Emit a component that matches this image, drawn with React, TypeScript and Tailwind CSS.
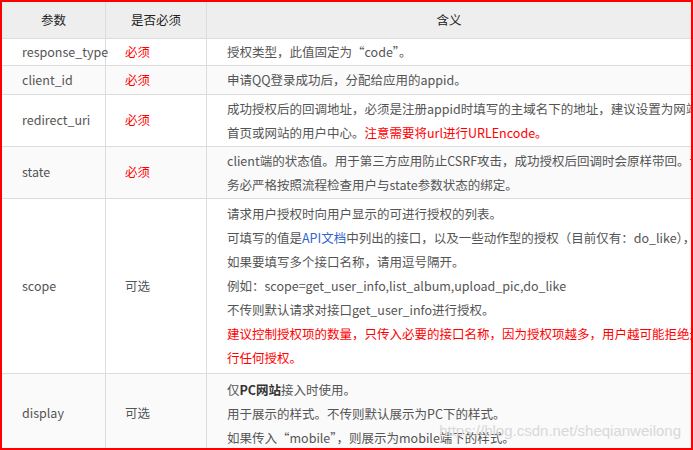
const F = { fontFamily: '"Microsoft YaHei","Noto Sans CJK SC","Liberation Sans",sans-serif' };
const R = "text-[#ff0000]";
const rows: { p: string; m: string; req: boolean; h: number; bg: string; d: React.ReactNode }[] = [
  { p: "response_type", m: "必须", req: true, h: 27, bg: "bg-white", d: <div>授权类型，此值固定为“code”。</div> },
  { p: "client_id", m: "必须", req: true, h: 29, bg: "bg-[#fafafa]", d: <div>申请QQ登录成功后，分配给应用的appid。</div> },
  { p: "redirect_uri", m: "必须", req: true, h: 52, bg: "bg-white", d: <><div>成功授权后的回调地址，必须是注册appid时填写的主域名下的地址，建议设置为网站</div><div>首页或网站的用户中心。<span className={R}>注意需要将url进行URLEncode。</span></div></> },
  { p: "state", m: "必须", req: true, h: 52, bg: "bg-[#fafafa]", d: <><div>client端的状态值。用于第三方应用防止CSRF攻击，成功授权后回调时会原样带回。请</div><div>务必严格按照流程检查用户与state参数状态的绑定。</div></> },
  { p: "scope", m: "可选", req: false, h: 175, bg: "bg-white", d: <><div>请求用户授权时向用户显示的可进行授权的列表。</div><div>可填写的值是<span className="text-[#3366cc]">API文档</span>中列出的接口，以及一些动作型的授权（目前仅有：do_like），</div><div>如果要填写多个接口名称，请用逗号隔开。</div><div>例如：scope=get_user_info,list_album,upload_pic,do_like</div><div>不传则默认请求对接口get_user_info进行授权。</div><div className={R}>建议控制授权项的数量，只传入必要的接口名称，因为授权项越多，用户越可能拒绝进</div><div className={R}>行任何授权。</div></> },
  { p: "display", m: "可选", req: false, h: 80, bg: "bg-[#fafafa]", d: <><div>仅<b className="text-[#333]">PC网站</b>接入时使用。</div><div>用于展示的样式。不传则默认展示为PC下的样式。</div><div>如果传入“mobile”，则展示为mobile端下的样式。</div></> },
];
export default function App() {
  return (
    <div className="relative w-[693px] h-[450px] overflow-hidden border-2 border-[#ff0000] bg-white text-[12.5px] text-[#555]" style={F}>
      <div className="flex h-[37px] bg-[#eeeeee] text-[#222] border-b border-[#dcdcdc]">
        <div className="w-[104px] shrink-0 flex items-center justify-center border-r border-[#dcdcdc]">参数</div>
        <div className="w-[101px] shrink-0 flex items-center justify-center border-r border-[#dcdcdc]">是否必须</div>
        <div className="flex-1 min-w-0 flex items-center justify-center">含义</div>
      </div>
      {rows.map((r) => (
        <div key={r.p} className={`flex border-b border-[#dcdcdc] ${r.bg}`} style={{ height: r.h }}>
          <div className="w-[104px] shrink-0 flex items-center pl-[20px] border-r border-[#dcdcdc]">{r.p}</div>
          <div className={`w-[101px] shrink-0 flex items-center pl-[19px] border-r border-[#dcdcdc] ${r.req ? R : ""}`}>{r.m}</div>
          <div className="flex-1 min-w-0 overflow-hidden flex flex-col justify-center pl-[20px] leading-[24px] whitespace-nowrap">{r.d}</div>
        </div>
      ))}
      <div className="absolute right-[10px] bottom-[6px] text-[15px] text-[#d8d8d8] pointer-events-none" style={{ fontFamily: '"Liberation Sans",sans-serif' }}>https://blog.csdn.net/sheqianweilong</div>
    </div>
  );
}
